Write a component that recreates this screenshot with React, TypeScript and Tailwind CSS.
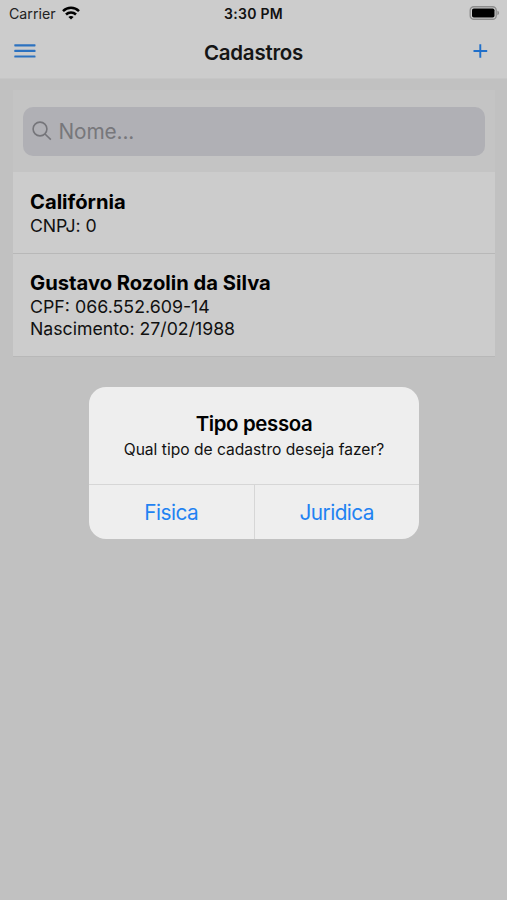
import React from "react";

function StatusBar() {
  return (
    <div className="relative flex h-[27px] items-center justify-between pl-[9px] pr-[7px]">
      <div className="flex items-center gap-[6px]">
        <span className="text-[14.2px] leading-[18px] text-[#222]">Carrier</span>
        <svg width="18" height="14" viewBox="0 0 18 14" fill="none" stroke="#000" strokeWidth="2.5" className="mb-[2px]">
          <path d="M1 5.1C5.5 0.7 12.5 0.7 17 5.1" />
          <path d="M4 8.5C6.8 5.7 11.2 5.7 14 8.5" />
          <path d="M6.4 10.9C7.9 9.6 10.1 9.6 11.6 10.9L9 13.5Z" fill="#000" stroke="none" />
        </svg>
      </div>
      <span className="absolute left-0 top-[5px] w-full text-center text-[14px] font-semibold leading-[18px] tracking-[0.3px] text-[#111]">3:30 PM</span>
      <svg width="31" height="14" viewBox="0 0 31 14" className="mb-[1px]">
        <rect x="1.2" y="0.75" width="26" height="12.5" rx="3.6" fill="none" stroke="#8c8c8c" strokeWidth="1.3" />
        <rect x="3" y="2.5" width="22.5" height="9" rx="1.8" fill="#000" />
        <path d="M28.4 4.8C30.6 5.4 30.6 8.6 28.4 9.2Z" fill="#8c8c8c" />
      </svg>
    </div>
  );
}

function NavBar() {
  return (
    <div className="flex h-[51px] items-center justify-between pl-[14px] pr-[19px]">
      <svg width="22" height="14" viewBox="0 0 22 14" className="mb-[3px]" fill="#2c72c0">
        <rect x="0.3" y="0.2" width="21.2" height="2.2" rx="0.6" />
        <rect x="0.3" y="5.8" width="21.2" height="2.2" rx="0.6" />
        <rect x="0.3" y="11.4" width="21.2" height="2.2" rx="0.6" />
      </svg>
      <h1 className="mr-[2px] text-[20.5px] font-semibold leading-[26px] tracking-[-0.25px] text-[#151515]">Cadastros</h1>
      <svg width="15" height="14" viewBox="0 0 15 14" className="mb-[3px]" stroke="#1f6fca" strokeWidth="1.9">
        <path d="M0.5 7H14.2M7.3 0.2V13.8" />
      </svg>
    </div>
  );
}

export default function App() {
  return (
    <div className="relative h-[900px] w-[507px] overflow-hidden bg-[#c1c1c1] font-['Inter','Liberation_Sans',sans-serif] text-black">
      <header className="h-[79px] border-b border-[#c6c6c6] bg-[#cccccc]">
        <StatusBar />
        <NavBar />
      </header>
      <main className="ml-[13px] mr-[12px] mt-[11px]">
        <div className="h-[82px] bg-[#c4c4c4] px-[10px] pt-[17px]">
          <div className="flex h-[49px] items-center rounded-[10px] bg-[#b0b0b5] pl-[9px]">
            <svg width="20" height="20" viewBox="0 0 20 20" fill="none" stroke="#75757a" strokeWidth="1.6" className="mb-[2px]">
              <circle cx="8" cy="8" r="6.9" />
              <path d="M13 13L18.8 18.6" />
            </svg>
            <span className="ml-[6.5px] text-[20.8px] leading-[26px] tracking-[-0.1px] text-[#77777b]">Nome...</span>
          </div>
        </div>
        <div className="h-[82px] border-b border-[#b8b8b8] bg-[#cccccc] pl-[17px] pt-[18px]">
          <p className="text-[20.2px] font-bold leading-[24px]">Califórnia</p>
          <p className="pt-px text-[17.7px] leading-[22px] tracking-[-0.1px] text-[#111]">CNPJ: 0</p>
        </div>
        <div className="h-[103px] border-b border-[#b8b8b8] bg-[#cccccc] pl-[17px] pt-[17px]">
          <p className="text-[20.2px] font-bold leading-[24px]">Gustavo Rozolin da Silva</p>
          <p className="pt-px text-[17.8px] leading-[22px] text-[#111]">CPF: 066.552.609-14</p>
          <p className="text-[17.7px] leading-[22px] text-[#111]">Nascimento: 27/02/1988</p>
        </div>
      </main>
      <div className="absolute left-[89px] top-[387px] flex h-[152px] w-[330px] flex-col overflow-hidden rounded-[17px] bg-[#eeeeee]">
        <div className="h-[98px] border-b border-[#d6d6d6] pt-[24px] text-center">
          <h2 className="text-[20.4px] font-semibold leading-[26px] tracking-[-0.35px]">Tipo pessoa</h2>
          <p className="text-[15.6px] leading-[26px] text-[#111]">Qual tipo de cadastro deseja fazer?</p>
        </div>
        <div className="flex flex-1 text-[20.8px] tracking-[-0.55px] text-[#1f82f2]">
          <button className="flex-1 border-r border-[#d6d6d6] pt-[2px]">Fisica</button>
          <button className="flex-1 pt-[2px]">Juridica</button>
        </div>
      </div>
    </div>
  );
}
